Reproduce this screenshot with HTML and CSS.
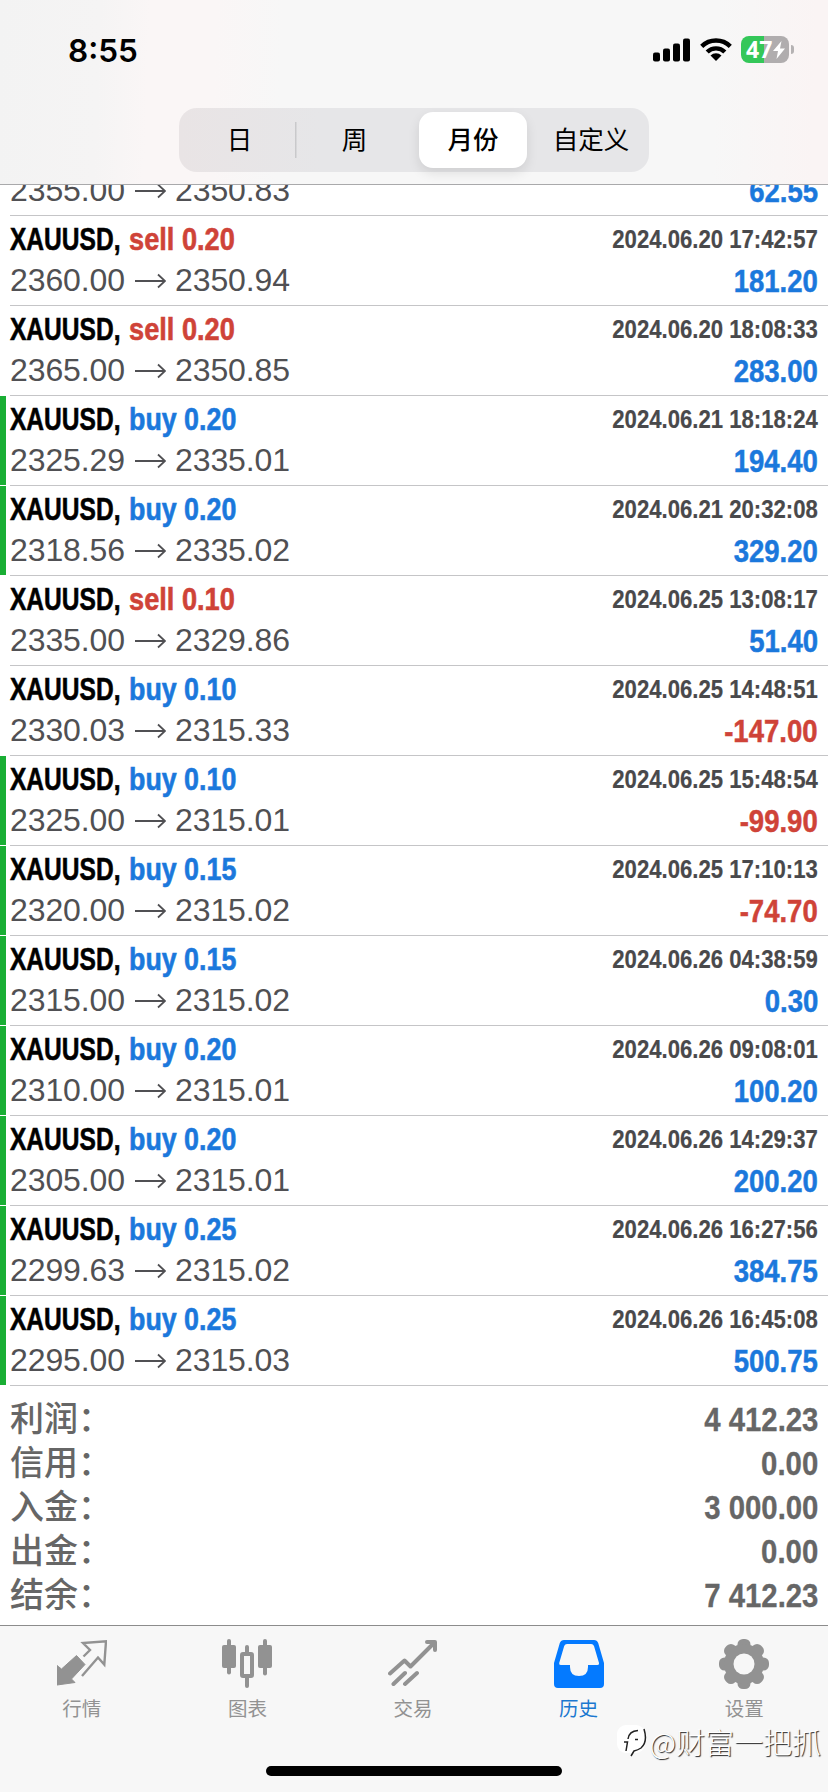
FILE: index.html
```
<!DOCTYPE html>
<html lang="zh-CN">
<head>
<meta charset="utf-8">
<title>历史</title>
<link rel="stylesheet" href="styles.css">
</head>
<body>
<div class="app">
  <header class="header">
    <div class="status">
      <span class="clock">8:55</span>
      <div class="indicators">
        <svg class="signal" viewBox="0 0 37 24"><rect x="0" y="14.500" width="7" height="9" rx="2"/><rect x="10" y="10.500" width="7" height="13" rx="2"/><rect x="20" y="5.500" width="7" height="18" rx="2"/><rect x="30" y="0.500" width="7" height="23" rx="2"/></svg>
        <svg class="wifi" viewBox="0 0 32 24"><g fill="none" stroke="#000" stroke-width="4.400"><path d="M1.700 9.300a20.500 20.500 0 0 1 28.600 0"/><path d="M7.200 15a12.500 12.500 0 0 1 17.600 0"/></g><path d="M10.500 18.600a7.800 7.800 0 0 1 11 0L16 24z"/></svg>
        <div class="battery"><span class="level">47</span><svg class="bolt" viewBox="0 0 12 18"><path d="M8.500 0 0 10h5L3.500 18 12 7.500H7z" fill="#fff"/></svg></div>
        <span class="nub"></span>
      </div>
    </div>
    <nav class="segments">
      <span class="segment">日</span>
      <span class="segment divided">周</span>
      <span class="segment selected">月份</span>
      <span class="segment">自定义</span>
    </nav>
  </header>
  <main class="content">
    <div class="deals" id="deals"></div>
    <dl class="summary">
      <div class="total"><dt>利润：</dt><dd>4 412.23</dd></div>
      <div class="total"><dt>信用：</dt><dd>0.00</dd></div>
      <div class="total"><dt>入金：</dt><dd>3 000.00</dd></div>
      <div class="total"><dt>出金：</dt><dd>0.00</dd></div>
      <div class="total"><dt>结余：</dt><dd>7 412.23</dd></div>
    </dl>
  </main>
  <footer class="tabbar">
    <div class="tab"><svg viewBox="0 0 50 50"><path d="M19.500 16.500 28 25.500 14.500 40 18 43.500 0 46V26.500l4.500 3.500z" stroke="#929292" stroke-width="1" stroke-linejoin="round"/><path d="M26.500 17.500 33 11 26 4 49 2.300 47.300 25.500 41 18.500 25 37" fill="none" stroke="#929292" stroke-width="2.400"/></svg><span>行情</span></div>
    <div class="tab"><svg viewBox="0 0 50 50"><rect x="0" y="6" width="14" height="23" rx="2"/><rect x="5" y="0" width="4" height="35.500" rx="2"/><rect x="36" y="6" width="14" height="23" rx="2"/><rect x="41" y="0" width="4" height="36.500" rx="2"/><rect x="23" y="6" width="4" height="9" rx="2"/><rect x="23" y="37" width="4" height="12" rx="2"/><rect x="20" y="15" width="10" height="22" rx="1" fill="none" stroke="#929292" stroke-width="4"/></svg><span>图表</span></div>
    <div class="tab"><svg viewBox="0 0 50 50"><g fill="none" stroke="#929292" stroke-width="4" stroke-linecap="round" stroke-linejoin="round"><path d="M2 34.500 16.500 21.500 22.500 27.500 46 4M39 3h8v8M5.500 45 17 34M17 45 29 34"/></g></svg><span>交易</span></div>
    <div class="tab active"><svg viewBox="0 0 50 50"><path fill-rule="evenodd" d="M10 1h30q3 0 4.200 3L50 24v21q0 4-4 4H4q-4 0-4-4V24L5.800 4Q7 1 10 1zM13 5q-2 0-2.800 2L5.200 24q-.5 2 1.500 2H16v2q0 9 9 9t9-9v-2h9.500q2 0 1.500-2L40 7q-.8-2-2.800-2z"/></svg><span>历史</span></div>
    <div class="tab"><svg viewBox="0 0 50 50"><g><rect x="18.500" y="0" width="13" height="50" rx="5.500"/><rect x="18.500" y="0" width="13" height="50" rx="5.500" transform="rotate(45 25 25)"/><rect x="18.500" y="0" width="13" height="50" rx="5.500" transform="rotate(90 25 25)"/><rect x="18.500" y="0" width="13" height="50" rx="5.500" transform="rotate(135 25 25)"/><circle cx="25" cy="25" r="20"/></g><circle cx="25" cy="25" r="10.500" fill="#f7f7f7"/></svg><span>设置</span></div>
    <div class="home"></div>
    <div class="watermark"><svg viewBox="0 0 30 34"><rect x="0" y="1" width="28" height="28" rx="9" fill="#fff"/><path d="M9 27 10.500 18H7M11 15Q12 7 21 6.500M18 15.500h3M27 5q4 13-3 19-3 2-7 3l-3 5" fill="none" stroke="#222" stroke-width="1.500"/></svg><span>@财富一把抓</span></div>
  </footer>
</div>
<script src="app.js"></script>
</body>
</html>
```
FILE: styles.css
```
* { box-sizing: border-box; }
body { margin: 0; background: #fff; font-family: "Liberation Sans", "Noto Sans CJK SC", sans-serif; }
.app { width: 828px; height: 1792px; display: flex; flex-direction: column; overflow: hidden; }
.header { height: 185px; flex: none; border-bottom: 1px solid #a9a9ab; background: linear-gradient(92deg, #f3f3f3 0, #f5f4f4 12%, #faf6f6 18%, #faf6f6 26%, #f7f7f7 34%, #f7f7f7 86%, #faf4f4 98%); }
.status { height: 108px; padding: 0 34px 0 68px; display: flex; justify-content: space-between; align-items: flex-start; }
.clock { margin-top: 31px; font: 600 31.500px/39px Inter, sans-serif; color: #000; }
.indicators { margin-top: 36px; display: flex; align-items: flex-start; }
.signal { width: 37px; height: 24px; margin: 1.5px 9.500px 0 0; }
.wifi { width: 32px; height: 24px; margin: 1px 9.500px 0 0; }
.battery { width: 48px; height: 27px; border-radius: 8px; display: flex; align-items: center; padding-left: 5px; background: linear-gradient(90deg, #34c759 23px, #b0adae 23px); }
.level { font: 700 23px/27px "Open Sans", sans-serif; color: #fff; width: 26px; }
.bolt { width: 12px; height: 18px; margin-left: 1px; }
.nub { width: 3px; height: 9px; margin: 9px 0 0 2px; border-radius: 0 4px 4px 0; background: #b5b2b3; }
.segments { width: 470px; height: 64px; margin-left: 179px; border-radius: 18px; padding: 4px; display: grid; grid-template-columns: 112px 124px 108px 1fr; background: linear-gradient(90deg, #e9e4e5, #e6e6e8 30%); font: 400 25.500px/52px "Noto Sans CJK SC", sans-serif; color: #000; text-align: center; }
.segment { height: 56px; padding-left: 0; }
.segment:first-child { padding-left: 1px; }
.segment:last-child { padding-left: 10px; }
.segment.divided { padding-right: 5px; background: linear-gradient(#c9c9cb, #c9c9cb) 0 10px / 1.500px 36px no-repeat; }
.segment.selected { background: #fff; border-radius: 14px; font-weight: 500; box-shadow: 0 5px 12px rgba(0,0,0,.1); }
.content { flex: 1; min-height: 0; overflow: hidden; }
.deals { margin-top: -59px; }
.deal { height: 90px; display: grid; grid-template-columns: 10px 1fr auto; }
.mark { width: 6px; height: 89px; }
.mark.green { background: #19ae34; }
.left { border-bottom: 1px solid #c5c5c7; }
.right { border-bottom: 1px solid #c5c5c7; padding-right: 10px; display: flex; flex-direction: column; align-items: flex-end; }
.title { height: 45px; display: flex; font-weight: 700; font-size: 32px; line-height: 46px; white-space: pre; -webkit-text-stroke: .6px currentColor; }
.symbol { width: 118.500px; transform: scaleX(.767); transform-origin: 0 0; color: #000; }
.side { transform: scaleX(.838); transform-origin: 0 0; }
.side.red { transform: scaleX(.85); }
.blue { color: #1b78dc; }
.red { color: #cf4338; }
.prices { height: 44px; display: flex; align-items: flex-start; font-size: 32px; line-height: 38px; color: #505053; letter-spacing: -.1px; }
.prices svg { width: 31px; height: 16px; margin: 12px 9px 0 10px; }
.time { height: 45px; font-weight: 700; font-size: 25.500px; line-height: 47px; color: #49494b; transform: scaleX(.868); transform-origin: 100% 0; white-space: pre; -webkit-text-stroke: .2px currentColor; }
.profit { font-weight: 700; font-size: 32px; line-height: 40px; transform: scaleX(.86); transform-origin: 100% 0; -webkit-text-stroke: .5px currentColor; }
.summary { margin: 0; padding: 10px 10px 0 10px; }
.total { height: 44px; display: flex; justify-content: space-between; line-height: 42px; color: #666; }
.total dt { font-family: "Noto Sans CJK SC", sans-serif; font-weight: 500; font-size: 34px; }
.total dd { margin: 0; font-weight: 700; font-size: 33px; line-height: 48px; transform: scaleX(.89); transform-origin: 100% 0; -webkit-text-stroke: .3px currentColor; }
.tabbar { height: 167px; flex: none; position: relative; border-top: 1px solid #8c8c8c; background: #f7f7f7; display: grid; grid-template-columns: repeat(5, 1fr); }
.tab { display: flex; flex-direction: column; align-items: center; padding: 13px 2px 0 0; color: #929292; fill: #929292; font: 400 19.500px/28px "Noto Sans CJK SC", sans-serif; }
.tab svg { width: 50px; height: 50px; margin-bottom: 5px; }
.tab.active { color: #1b78d0; fill: #047aff; }
.home { position: absolute; left: 266px; bottom: 16px; width: 296px; height: 10px; border-radius: 5px; background: #000; }
.watermark { position: absolute; right: 7px; top: 97px; display: flex; align-items: flex-start; font: 300 29px/36px "Noto Sans CJK SC", sans-serif; color: #fff; text-shadow: 1px 1px 1px #222; white-space: nowrap; }
.watermark svg { width: 30px; height: 34px; margin: 1px 3px 0 0; }
```
FILE: app.js
```
const deals = [
  ['sell 0.20', '2355.00', '2350.83', '2024.06.20 17:40:12', '62.55', 0],
  ['sell 0.20', '2360.00', '2350.94', '2024.06.20 17:42:57', '181.20', 0],
  ['sell 0.20', '2365.00', '2350.85', '2024.06.20 18:08:33', '283.00', 0],
  ['buy 0.20', '2325.29', '2335.01', '2024.06.21 18:18:24', '194.40', 1],
  ['buy 0.20', '2318.56', '2335.02', '2024.06.21 20:32:08', '329.20', 1],
  ['sell 0.10', '2335.00', '2329.86', '2024.06.25 13:08:17', '51.40', 0],
  ['buy 0.10', '2330.03', '2315.33', '2024.06.25 14:48:51', '-147.00', 0],
  ['buy 0.10', '2325.00', '2315.01', '2024.06.25 15:48:54', '-99.90', 1],
  ['buy 0.15', '2320.00', '2315.02', '2024.06.25 17:10:13', '-74.70', 1],
  ['buy 0.15', '2315.00', '2315.02', '2024.06.26 04:38:59', '0.30', 1],
  ['buy 0.20', '2310.00', '2315.01', '2024.06.26 09:08:01', '100.20', 1],
  ['buy 0.20', '2305.00', '2315.01', '2024.06.26 14:29:37', '200.20', 1],
  ['buy 0.25', '2299.63', '2315.02', '2024.06.26 16:27:56', '384.75', 1],
  ['buy 0.25', '2295.00', '2315.03', '2024.06.26 16:45:08', '500.75', 1]
];
const arrow = '<svg viewBox="0 0 31 16"><path d="M0 8H30M23 1.500 30 8 23 14.500" fill="none" stroke="#505053" stroke-width="1.800"/></svg>';
document.getElementById('deals').innerHTML = deals.map(([side, open, close, time, profit, green], i) => `
<div class="deal">
  <span class="mark ${green ? 'green' : ''}"></span>
  <div class="left">
    <div class="title">${i ? `<span class="symbol">XAUUSD,</span><span class="side ${side[0] === 's' ? 'red' : 'blue'}">${side}</span>` : ''}</div>
    <div class="prices"><span>${open}</span>${arrow}<span>${close}</span></div>
  </div>
  <div class="right">
    <div class="time">${i ? time : ''}</div>
    <div class="profit ${profit[0] === '-' ? 'red' : 'blue'}">${profit}</div>
  </div>
</div>`).join('');
```
